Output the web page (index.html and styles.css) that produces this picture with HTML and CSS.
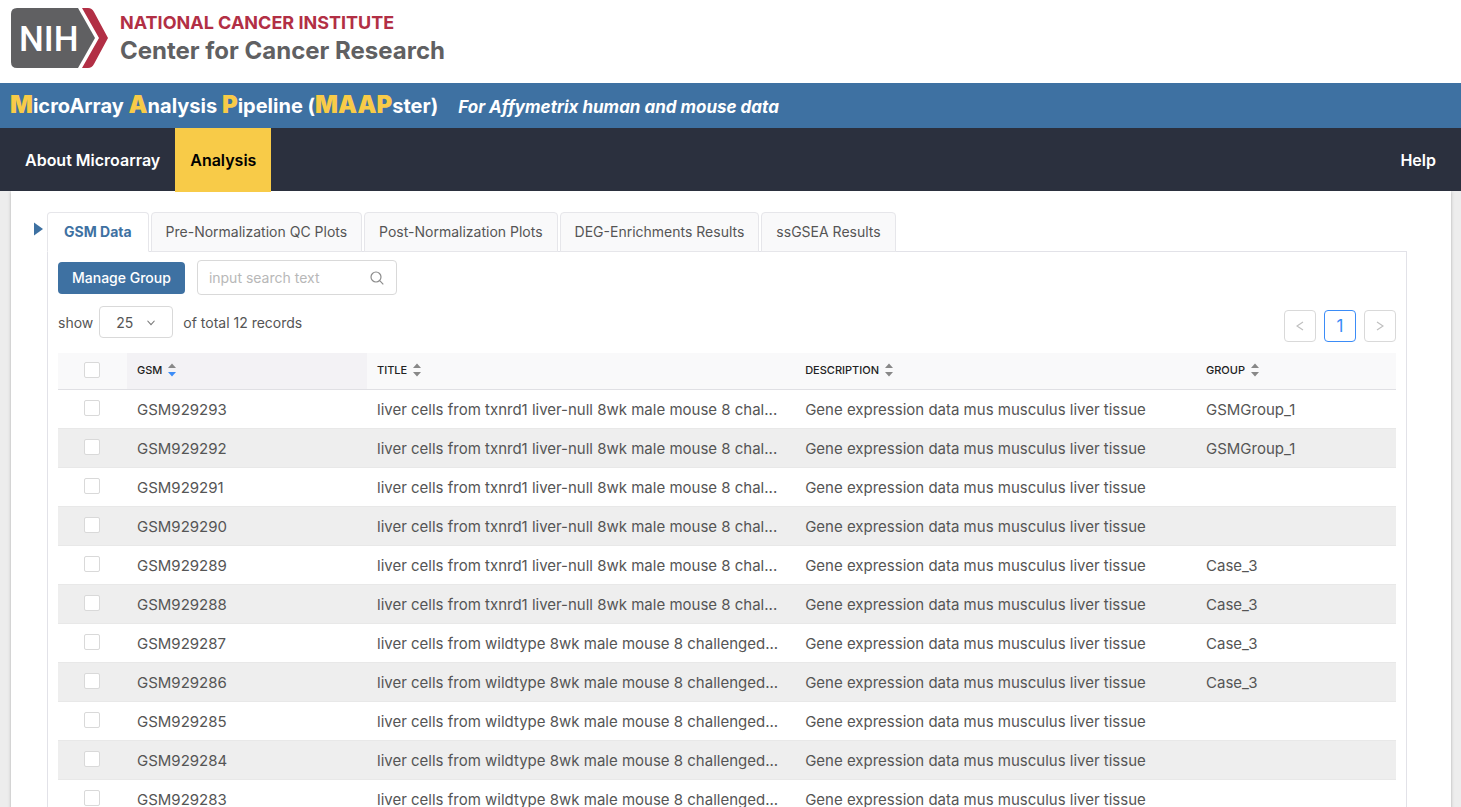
FILE: index.html
```
<!DOCTYPE html>
<html lang="en">
<head>
<meta charset="utf-8">
<title>MAAPster</title>
<link rel="stylesheet" href="styles.css">
</head>
<body>
<div class="page">
  <header class="brand">
    <svg class="brand-mark" width="97" height="60" viewBox="0 0 97 60" role="img" aria-label="NIH">
      <path d="M6 0H67L84 30L67 60H6Q0 60 0 54V6Q0 0 6 0Z" fill="#606062"/>
      <path d="M71 0H77Q81 0 83 4L97 30L83 56Q81 60 77 60H71L88 30Z" fill="#b22f45"/>
      <text class="brand-nih" x="8" y="43">NIH</text>
    </svg>
    <div class="brand-text">
      <div class="brand-institute">NATIONAL CANCER INSTITUTE</div>
      <div class="brand-center">Center for Cancer Research</div>
    </div>
  </header>

  <div class="banner">
    <h1 class="banner-title"><span class="cap">M</span>icroArray <span class="cap">A</span>nalysis <span class="cap">P</span>ipeline (<span class="cap">MAAP</span>ster)</h1>
    <em class="banner-sub">For Affymetrix human and mouse data</em>
  </div>

  <nav class="nav">
    <a class="nav-link" href="#about">About Microarray</a>
    <a class="nav-link nav-active" href="#analysis">Analysis</a>
    <a class="nav-link nav-help" href="#help">Help</a>
  </nav>

  <main class="content">
    <button class="expander" type="button" aria-label="Open side panel"><svg width="9" height="14" viewBox="0 0 9 14"><path d="M0 0.5L9 7L0 13.5Z" fill="#3e71a2"/></svg></button>
    <div class="workspace">
      <div class="tabs" role="tablist">
        <button class="tab tab-active" type="button" role="tab" aria-selected="true">GSM Data</button>
        <button class="tab" type="button" role="tab">Pre-Normalization QC Plots</button>
        <button class="tab" type="button" role="tab">Post-Normalization Plots</button>
        <button class="tab" type="button" role="tab">DEG-Enrichments Results</button>
        <button class="tab" type="button" role="tab">ssGSEA Results</button>
      </div>
      <section class="panel">
        <div class="tools">
          <button class="primary" type="button">Manage Group</button>
          <label class="search">
            <input class="search-input" type="text" placeholder="input search text" aria-label="Search">
            <svg width="14" height="14" viewBox="0 0 14 14" fill="none" stroke="#8c8c8c" stroke-width="1.2"><circle cx="6" cy="6" r="5"/><path d="M9.7 9.7L13.3 13.3"/></svg>
          </label>
        </div>
        <div class="records">
          <div class="page-size">
            <label for="size">show</label>
            <span class="select-wrap">
              <select class="select" id="size"><option>25</option></select>
              <svg class="select-arrow" width="10" height="8" viewBox="0 0 10 8" fill="none" stroke="#777" stroke-width="1.2"><path d="M1 2L5 6.5L9 2"/></svg>
            </span>
            <span>of total 12 records</span>
          </div>
          <div class="pager">
            <button class="pager-btn" type="button" aria-label="Previous page"><svg width="8" height="10" viewBox="0 0 8 10" fill="none" stroke="#bfbfbf" stroke-width="1.2"><path d="M7 1L1 5L7 9"/></svg></button>
            <button class="pager-btn pager-current" type="button">1</button>
            <button class="pager-btn" type="button" aria-label="Next page"><svg width="8" height="10" viewBox="0 0 8 10" fill="none" stroke="#bfbfbf" stroke-width="1.2"><path d="M1 1L7 5L1 9"/></svg></button>
          </div>
        </div>
        <table class="grid">
          <colgroup><col class="c-check"><col class="c-gsm"><col class="c-title"><col class="c-desc"><col class="c-group"></colgroup>
          <thead>
            <tr>
              <th class="check"><input class="box" type="checkbox" aria-label="Select all"></th>
              <th class="sorted"><span class="head">GSM<svg width="8" height="14" viewBox="0 0 8 14"><path d="M4 0.5L8 5H0Z" fill="#888"/><path d="M4 13.5L0 9H8Z" fill="#3b8cf7"/></svg></span></th>
              <th><span class="head">TITLE<svg width="8" height="14" viewBox="0 0 8 14"><path d="M4 0.5L8 5H0ZM4 13.5L0 9H8Z" fill="#888"/></svg></span></th>
              <th><span class="head">DESCRIPTION<svg width="8" height="14" viewBox="0 0 8 14"><path d="M4 0.5L8 5H0ZM4 13.5L0 9H8Z" fill="#888"/></svg></span></th>
              <th><span class="head">GROUP<svg width="8" height="14" viewBox="0 0 8 14"><path d="M4 0.5L8 5H0ZM4 13.5L0 9H8Z" fill="#888"/></svg></span></th>
            </tr>
          </thead>
          <tbody>
            <tr><td class="check"><input class="box" type="checkbox" aria-label="GSM929293"></td><td>GSM929293</td><td>liver cells from txnrd1 liver-null 8wk male mouse 8 chal...</td><td>Gene expression data mus musculus liver tissue</td><td>GSMGroup_1</td></tr>
            <tr><td class="check"><input class="box" type="checkbox" aria-label="GSM929292"></td><td>GSM929292</td><td>liver cells from txnrd1 liver-null 8wk male mouse 8 chal...</td><td>Gene expression data mus musculus liver tissue</td><td>GSMGroup_1</td></tr>
            <tr><td class="check"><input class="box" type="checkbox" aria-label="GSM929291"></td><td>GSM929291</td><td>liver cells from txnrd1 liver-null 8wk male mouse 8 chal...</td><td>Gene expression data mus musculus liver tissue</td><td></td></tr>
            <tr><td class="check"><input class="box" type="checkbox" aria-label="GSM929290"></td><td>GSM929290</td><td>liver cells from txnrd1 liver-null 8wk male mouse 8 chal...</td><td>Gene expression data mus musculus liver tissue</td><td></td></tr>
            <tr><td class="check"><input class="box" type="checkbox" aria-label="GSM929289"></td><td>GSM929289</td><td>liver cells from txnrd1 liver-null 8wk male mouse 8 chal...</td><td>Gene expression data mus musculus liver tissue</td><td>Case_3</td></tr>
            <tr><td class="check"><input class="box" type="checkbox" aria-label="GSM929288"></td><td>GSM929288</td><td>liver cells from txnrd1 liver-null 8wk male mouse 8 chal...</td><td>Gene expression data mus musculus liver tissue</td><td>Case_3</td></tr>
            <tr><td class="check"><input class="box" type="checkbox" aria-label="GSM929287"></td><td>GSM929287</td><td>liver cells from wildtype 8wk male mouse 8 challenged...</td><td>Gene expression data mus musculus liver tissue</td><td>Case_3</td></tr>
            <tr><td class="check"><input class="box" type="checkbox" aria-label="GSM929286"></td><td>GSM929286</td><td>liver cells from wildtype 8wk male mouse 8 challenged...</td><td>Gene expression data mus musculus liver tissue</td><td>Case_3</td></tr>
            <tr><td class="check"><input class="box" type="checkbox" aria-label="GSM929285"></td><td>GSM929285</td><td>liver cells from wildtype 8wk male mouse 8 challenged...</td><td>Gene expression data mus musculus liver tissue</td><td></td></tr>
            <tr><td class="check"><input class="box" type="checkbox" aria-label="GSM929284"></td><td>GSM929284</td><td>liver cells from wildtype 8wk male mouse 8 challenged...</td><td>Gene expression data mus musculus liver tissue</td><td></td></tr>
            <tr><td class="check"><input class="box" type="checkbox" aria-label="GSM929283"></td><td>GSM929283</td><td>liver cells from wildtype 8wk male mouse 8 challenged...</td><td>Gene expression data mus musculus liver tissue</td><td></td></tr>
          </tbody>
        </table>
      </section>
    </div>
  </main>
</div>
</body>
</html>
```
FILE: styles.css
```
* { box-sizing: border-box; }
body {
  margin: 0;
  background: #ededed;
  color: #555;
  font-family: Inter, "Liberation Sans", sans-serif;
  font-size: 14px;
}
button, input, select { font: inherit; color: inherit; }
button { cursor: pointer; }
.page { height: 100vh; overflow: hidden; }

.brand {
  display: flex;
  align-items: flex-start;
  gap: 12px;
  padding: 8px 11px 15px;
  background: #fff;
}
.brand-mark { flex: none; }
.brand-nih { font-family: Roboto, sans-serif; font-size: 35px; font-weight: 500; fill: #fff; }
.brand-text { padding-top: 3px; font-weight: 700; white-space: nowrap; }
.brand-institute { color: #b22f45; font-size: 18px; line-height: 24px; }
.brand-center { color: #606062; font-size: 24px; line-height: 31px; }

.banner {
  display: flex;
  align-items: center;
  gap: 20px;
  height: 45px;
  padding: 0 10px;
  background: #3e71a2;
  color: #fff;
}
.banner-title { margin: 0; font-size: 20px; font-weight: 700; line-height: 45px; white-space: nowrap; }
.cap { color: #f8cb48; font-size: 24px; font-weight: 900; }
.banner-sub { font-size: 17px; font-weight: 700; padding-top: 3px; }

.nav { position: relative; display: flex; height: 63px; padding: 0 10px; background: #2b303e; }
.nav-link {
  height: 64px;
  padding: 0 15px;
  color: #fff;
  font-size: 16px;
  font-weight: 600;
  line-height: 64px;
  text-decoration: none;
  white-space: nowrap;
}
.nav-active { background: #f8cb48; color: #000; }
.nav-help { margin-left: auto; }

.content {
  display: flex;
  align-items: flex-start;
  min-height: calc(100vh - 191px);
  margin: 0 10px 0 11px;
  padding: 21px 44px 40px 23px;
  background: #fff;
  box-shadow: 0 1px 3px #aaa;
}
.expander { display: flex; width: 13px; margin-top: 10px; padding: 0; border: 0; background: none; }
.workspace { flex: 1; min-width: 0; }
.tabs { display: flex; gap: 2px; margin-bottom: -1px; }
.tab {
  height: 40px;
  padding: 0 14px 1px;
  border: 1px solid #e6e6ea;
  border-radius: 4px 4px 0 0;
  background: #f9f9fa;
  white-space: nowrap;
}
.tab-active {
  position: relative;
  padding: 0 16px 1px;
  border-bottom-color: #fff;
  background: #fff;
  color: #3e71a2;
  font-weight: 700;
}
.panel { padding: 8px 10px; border: 1px solid #e2e2e8; }

.tools { display: flex; align-items: center; gap: 12px; }
.primary { height: 32px; padding: 0 14px; border: 0; border-radius: 4px; background: #3e71a2; color: #fff; font-weight: 500; }
.search {
  display: flex;
  align-items: center;
  width: 200px;
  height: 35px;
  padding: 0 12px 0 11px;
  border: 1px solid #d9d9d9;
  border-radius: 4px;
}
.search-input { flex: 1; min-width: 0; padding: 0; border: 0; outline: 0; background: none; }
.search-input::placeholder { color: #b8b8b8; }

.records { display: flex; justify-content: space-between; align-items: flex-start; padding: 11px 0; }
.page-size { display: flex; align-items: center; gap: 6px; }
.select-wrap { display: grid; align-items: center; margin-right: 4px; }
.select {
  grid-area: 1 / 1;
  appearance: none;
  width: 74px;
  height: 32px;
  padding: 0 16px;
  border: 1px solid #d9d9d9;
  border-radius: 4px;
  background: #fff;
}
.select-arrow { grid-area: 1 / 1; justify-self: end; margin-right: 17px; padding-top: 1px; pointer-events: none; }
.pager { display: flex; gap: 8px; padding-top: 4px; }
.pager-btn {
  display: flex;
  align-items: center;
  justify-content: center;
  width: 32px;
  height: 32px;
  padding: 0;
  border: 1px solid #d9d9d9;
  border-radius: 4px;
  background: #fff;
}
.pager-current { border-color: #3b8cf7; color: #3b8cf7; font-size: 17px; }

.grid { width: 100%; border-collapse: separate; border-spacing: 0; table-layout: fixed; }
.c-check { width: 69px; }
.c-gsm { width: 240px; }
.c-title { width: 32%; }
.c-group { width: 200px; }
.grid th {
  height: 37px;
  padding: 0 10px 2px;
  border-bottom: 1px solid #e0e0e4;
  background: #f9f9fa;
  color: #222;
  font-size: 11px;
  font-weight: 500;
  text-align: left;
}
.grid th.sorted { background: #f3f2f5; }
.head { display: flex; align-items: center; gap: 6px; }
.grid td {
  height: 39px;
  padding: 0 10px;
  border-bottom: 1px solid #e8e8e8;
  font-size: 15px;
  white-space: nowrap;
  overflow: hidden;
  text-overflow: ellipsis;
}
.grid tbody tr:nth-child(even) { background: #eee; }
.grid .check { padding: 0 2px 2px 0; }
.box {
  appearance: none;
  display: block;
  width: 16px;
  height: 16px;
  margin: 0 auto;
  border: 1px solid #d9d9d9;
  border-radius: 2px;
  background: #fff;
}
```
